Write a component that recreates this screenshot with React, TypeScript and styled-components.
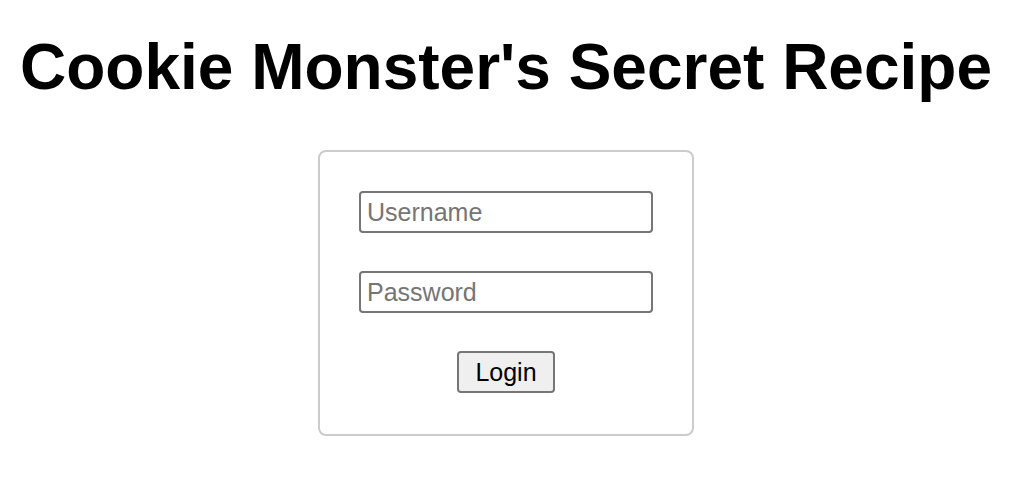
import styled, { createGlobalStyle } from "styled-components"

const GlobalStyle = createGlobalStyle`
  html, body {
    margin: 0;
    padding: 0;
    background: #ffffff;
  }
  body {
    font-family: "Liberation Sans", Arial, sans-serif;
    color: #000;
  }
`

const Page = styled.div`
  width: 1012px;
  display: flex;
  flex-direction: column;
  align-items: center;
`

const Title = styled.h1`
  margin: 31px 0 47px;
  font-size: 64px;
  line-height: 72px;
  font-weight: 700;
  white-space: nowrap;
`

const Card = styled.form`
  width: 296px;
  padding: 39px 38px 41px;
  border: 2px solid #cccccc;
  border-radius: 8px;
  display: flex;
  flex-direction: column;
  align-items: center;
  gap: 38px;
`

const Field = styled.input`
  box-sizing: border-box;
  width: 294px;
  height: 42px;
  padding: 0 6px;
  border: 2px solid #767676;
  border-radius: 4px;
  font-family: "Liberation Sans", Arial, sans-serif;
  font-size: 25px;
  color: #000;
  outline: none;

  &::placeholder {
    color: #757575;
  }
`

const Button = styled.button`
  box-sizing: border-box;
  width: 98px;
  height: 42px;
  border: 2px solid #767676;
  border-radius: 4px;
  background: #efefef;
  font-family: "Liberation Sans", Arial, sans-serif;
  font-size: 25px;
  color: #000;
  padding: 0;
`

const App = () => {
  return (
    <>
      <GlobalStyle />
      <Page>
        <Title>Cookie Monster's Secret Recipe</Title>
        <Card onSubmit={(e) => e.preventDefault()}>
          <Field type="text" placeholder="Username" />
          <Field type="password" placeholder="Password" />
          <Button type="submit">Login</Button>
        </Card>
      </Page>
    </>
  )
}

export default App
